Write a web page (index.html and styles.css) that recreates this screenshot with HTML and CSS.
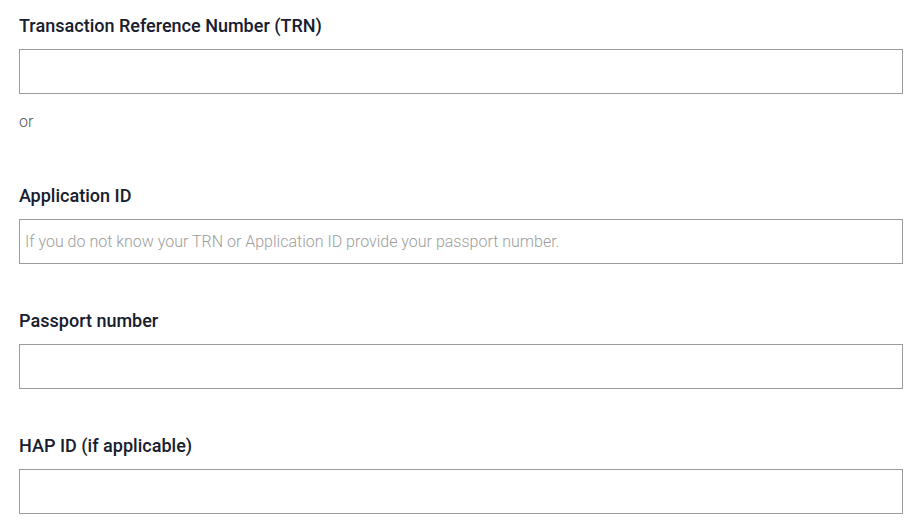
FILE: index.html
```html
<!DOCTYPE html>
<html lang="en">
<head>
  <meta charset="UTF-8">
  <title>Application lookup</title>
  <link rel="stylesheet" href="styles.css">
</head>
<body>
  <form class="lookup-form">
    <!-- TRN, with the "or" hint below it -->
    <div class="field field-trn">
      <label for="trn">Transaction Reference Number (TRN)</label>
      <input type="text" id="trn">
      <p class="or-note">or</p>
    </div>

    <div class="field">
      <label for="appId">Application ID</label>
      <input type="text" id="appId" placeholder="If you do not know your TRN or Application ID provide your passport number.">
    </div>

    <div class="field">
      <label for="passport">Passport number</label>
      <input type="text" id="passport">
    </div>

    <div class="field">
      <label for="hapId">HAP ID (if applicable)</label>
      <input type="text" id="hapId">
    </div>
  </form>
</body>
</html>
```

FILE: styles.css
```css
/* Global Styles */
body {
  margin: 0;
  padding: 14px 14px 0 19px;
  font-family: Roboto, 'Liberation Sans', sans-serif;
  background: #fff;
  color: #1a2233;
}

.lookup-form {
  display: flex;
  flex-direction: column;
  gap: 45px;
}

/* Label + input pair */
.field label {
  display: block;
  font-family: 'Roboto Medium', Roboto, sans-serif;
  font-size: 18px;
  font-weight: 500;
  line-height: 24px;
  margin-bottom: 11px;
  color: #18202f;
}

.field input {
  display: block;
  width: 100%;
  height: 45px;
  box-sizing: border-box;
  margin: 0;
  padding: 0 5px;
  border: 1px solid #9b9b9b;
  border-radius: 0;
  font-family: Roboto, 'Liberation Sans', sans-serif;
  font-size: 16px;
  font-weight: 300;
  color: #333;
  background: #fff;
}

.field input::placeholder {
  color: #9d9d9d;
  opacity: 1;
}

/* The "or" between TRN and Application ID */
.or-note {
  margin: 17px 0 6px;
  font-size: 16px;
  font-weight: 300;
  line-height: 22px;
  color: #555;
}
```
